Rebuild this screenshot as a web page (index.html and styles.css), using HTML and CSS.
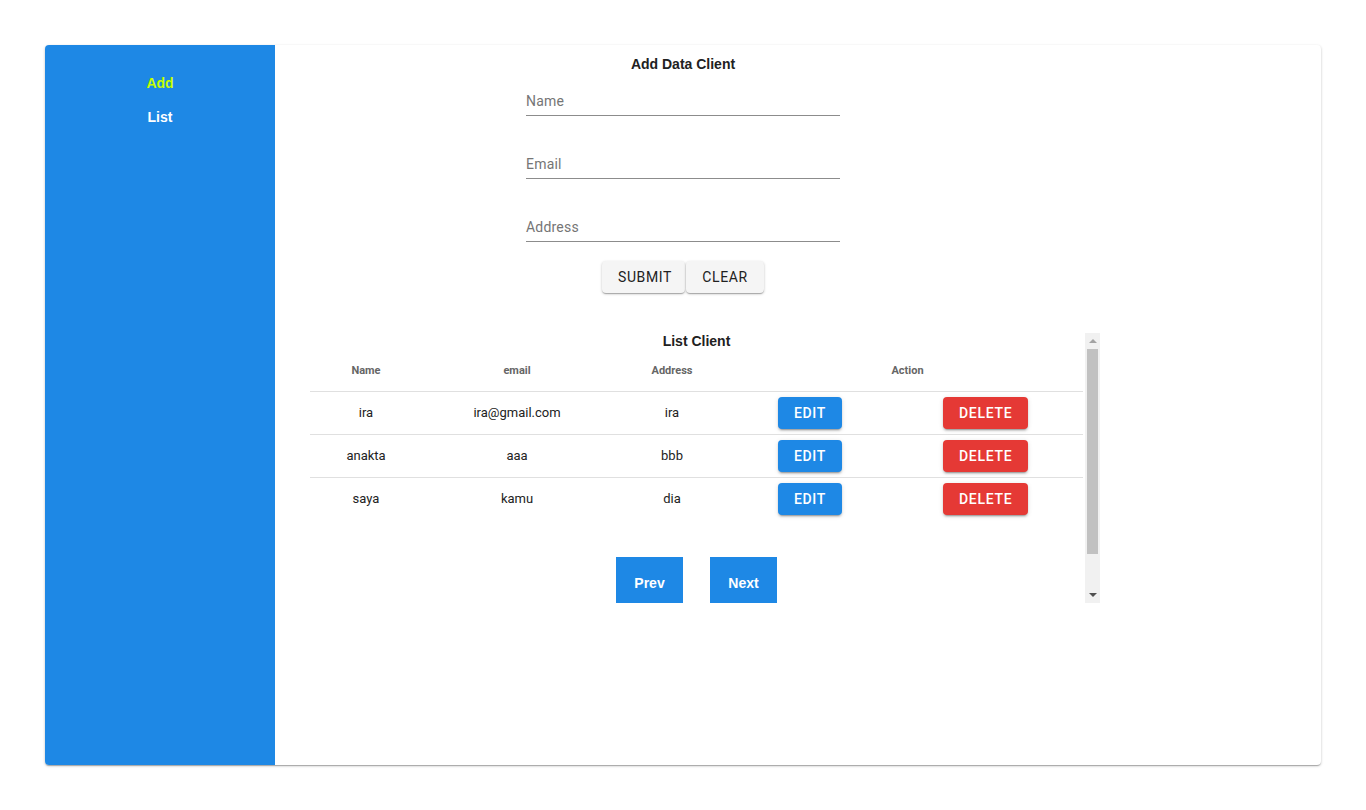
FILE: index.html
```html
<!DOCTYPE html>
<html>
<head>
<meta charset="utf-8">
<link rel="stylesheet" href="styles.css">
</head>
<body>
<div class="page">
  <div class="card">
    <nav class="sidebar">
      <a class="nav-item active">Add</a>
      <a class="nav-item">List</a>
    </nav>
    <main class="main">
      <section class="form">
        <h2 class="title">Add Data Client</h2>
        <div class="field"><span class="label">Name</span></div>
        <div class="field"><span class="label">Email</span></div>
        <div class="field"><span class="label">Address</span></div>
        <div class="form-actions">
          <button class="btn-light">Submit</button>
          <button class="btn-light">Clear</button>
        </div>
      </section>
      <section class="list-box">
        <div class="list-view">
          <div class="list-inner">
            <h2 class="list-title">List Client</h2>
            <table class="tbl">
              <colgroup>
                <col class="c1"><col class="c2"><col class="c3"><col class="c4"><col class="c5">
              </colgroup>
              <thead>
                <tr><th>Name</th><th>email</th><th>Address</th><th colspan="2">Action</th></tr>
              </thead>
              <tbody>
                <tr><td>ira</td><td>ira@gmail.com</td><td>ira</td><td><button class="btn btn-edit">Edit</button></td><td><button class="btn btn-del">Delete</button></td></tr>
                <tr><td>anakta</td><td>aaa</td><td>bbb</td><td><button class="btn btn-edit">Edit</button></td><td><button class="btn btn-del">Delete</button></td></tr>
                <tr class="last"><td>saya</td><td>kamu</td><td>dia</td><td><button class="btn btn-edit">Edit</button></td><td><button class="btn btn-del">Delete</button></td></tr>
              </tbody>
            </table>
            <div class="pager">
              <button class="pg">Prev</button>
              <button class="pg">Next</button>
            </div>
          </div>
        </div>
        <div class="scrollbar" aria-hidden="true">
          <div class="sb-btn"><span class="arrow-up"></span></div>
          <div class="sb-track"><div class="sb-thumb"></div></div>
          <div class="sb-btn"><span class="arrow-down"></span></div>
        </div>
      </section>
    </main>
  </div>
</div>
</body>
</html>
```

FILE: styles.css
```css
* { box-sizing: border-box; }
html, body { margin: 0; padding: 0; background: #fff; }
body { font-family: Roboto, "Liberation Sans", Arial, sans-serif; }
.page { padding: 45px; height: 810px; }
.card {
  display: flex;
  height: 720px;
  background: #fff;
  border-radius: 4px;
  box-shadow: 0 1px 3px rgba(0,0,0,0.2), 0 1px 1px rgba(0,0,0,0.14), 0 2px 1px -1px rgba(0,0,0,0.12);
}
.sidebar {
  width: 230px;
  flex: none;
  background: #1e88e5;
  border-radius: 4px 0 0 4px;
  display: flex;
  flex-direction: column;
  align-items: center;
  padding-top: 30px;
  gap: 18px;
}
.nav-item {
  font-family: "Liberation Sans", Arial, sans-serif;
  font-weight: bold;
  font-size: 14px;
  line-height: 16px;
  color: #fff;
}
.nav-item.active { color: #c6ff00; }
.main { flex: 1; padding-top: 10px; }
.form { width: 314px; margin-left: 251px; }
.title {
  margin: 0;
  text-align: center;
  font-family: "Liberation Sans", Arial, sans-serif;
  font-size: 14px;
  font-weight: bold;
  line-height: 18px;
  color: #212121;
}
.field {
  margin-top: 38px;
  padding-bottom: 4px;
  border-bottom: 1px solid #8c8c8c;
}
.field:first-of-type { margin-top: 18px; }
.label {
  display: block;
  font-size: 14px;
  letter-spacing: 0.2px;
  line-height: 20px;
  color: #757575;
}
.form-actions {
  display: flex;
  justify-content: center;
  gap: 1px;
  margin-top: 19px;
}
.btn-light {
  height: 32px;
  padding: 0 16px;
  border: none;
  border-radius: 4px;
  background: #f5f5f5;
  font-family: Roboto, sans-serif;
  font-size: 14px;
  letter-spacing: 0.6px;
  text-transform: uppercase;
  color: #212121;
  box-shadow: 0 1px 3px rgba(0,0,0,0.2), 0 1px 1px rgba(0,0,0,0.14), 0 2px 1px -1px rgba(0,0,0,0.12);
}
.btn-light:first-child { width: 83px; }
.btn-light:last-child { width: 78px; }
.list-box {
  display: flex;
  margin-top: 40px;
  margin-left: 35px;
  width: 790px;
  height: 270px;
}
.list-view { width: 775px; height: 270px; overflow: hidden; }
.list-inner { width: 773px; padding-bottom: 44px; }
.list-title {
  margin: 0;
  text-align: center;
  font-family: "Liberation Sans", Arial, sans-serif;
  font-size: 14px;
  font-weight: bold;
  line-height: 17px;
  color: #212121;
}
.tbl { width: 773px; border-collapse: collapse; table-layout: fixed; }
.c1 { width: 112px; } .c2 { width: 190px; } .c3 { width: 120px; } .c4 { width: 156px; } .c5 { width: 195px; }
.tbl th {
  height: 41px;
  padding: 0;
  font-size: 11px;
  font-weight: bold;
  color: #666;
  text-align: center;
  border-bottom: 1px solid #e0e0e0;
}
.tbl td {
  height: 43px;
  padding: 0;
  font-size: 13px;
  color: #222;
  text-align: center;
  border-bottom: 1px solid #e0e0e0;
}
.tbl tr.last td { border-bottom: none; }
.btn {
  height: 32px;
  min-width: 63px;
  padding: 0 16px;
  border: none;
  border-radius: 4px;
  color: #fff;
  font-family: Roboto, sans-serif;
  font-size: 14px;
  font-weight: 500;
  letter-spacing: 0.7px;
  text-transform: uppercase;
  box-shadow: 0 3px 1px -2px rgba(0,0,0,0.2), 0 2px 2px rgba(0,0,0,0.14), 0 1px 5px rgba(0,0,0,0.12);
  vertical-align: middle;
}
.btn-edit { background: #1e88e5; }
.btn-del { background: #e53935; width: 85px; }
.pager {
  display: flex;
  justify-content: center;
  gap: 27px;
  margin-top: 37px;
}
.pg {
  width: 67px;
  height: 46px;
  border: none;
  background: #1e88e5;
  color: #fff;
  font-family: "Liberation Sans", Arial, sans-serif;
  font-size: 14px;
  font-weight: bold;
  padding: 6px 0 0;
}
.scrollbar {
  width: 15px;
  flex: none;
  background: #f1f1f1;
  display: flex;
  flex-direction: column;
}
.sb-btn {
  height: 16px;
  flex: none;
  display: flex;
  align-items: center;
  justify-content: center;
}
.sb-track { flex: 1; padding: 0 2px; }
.sb-thumb { height: 205px; background: #c1c1c1; }
.arrow-up {
  width: 0; height: 0;
  border-left: 4px solid transparent;
  border-right: 4px solid transparent;
  border-bottom: 4px solid #a3a3a3;
}
.arrow-down {
  width: 0; height: 0;
  border-left: 4px solid transparent;
  border-right: 4px solid transparent;
  border-top: 4px solid #505050;
}
```
